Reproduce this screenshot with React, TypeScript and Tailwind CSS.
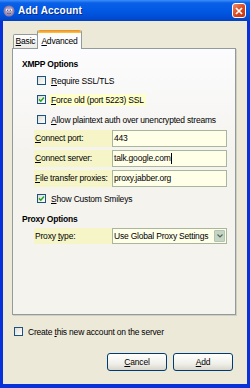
import React from 'react';

const Check: React.FC<{ checked?: boolean }> = ({ checked }) => (
  <div className="w-[9px] h-[9px] flex-none border border-[#1c5180] bg-[linear-gradient(135deg,#dcdcd7,#ffffff)] flex items-center justify-center">
    {checked && (
      <svg width="7" height="7" viewBox="0 0 7 7">
        <path d="M1 3.4 L2.8 5.2 L6 1.6" fill="none" stroke="#21a121" strokeWidth="1.5" />
      </svg>
    )}
  </div>
);

const CheckRow: React.FC<{ checked?: boolean; hi?: boolean; className?: string; children: React.ReactNode }> = ({
  checked,
  hi,
  className,
  children
}) => (
  <div className={`h-[13px] flex items-center ${className ?? ''}`}>
    <Check checked={checked} />
    <span className={`ml-[3px] px-[2px] h-[12px] leading-[12px] ${hi ? 'bg-[#ffffcc]' : ''}`}>{children}</span>
  </div>
);

const FieldRow: React.FC<{ label: React.ReactNode; value: string; cursor?: boolean }> = ({ label, value, cursor }) => (
  <div className="h-[17px] flex">
    <div className="w-[78px] bg-[#f5f5c8] pl-[1px] flex items-center">{label}</div>
    <div className="w-[115px] border border-[#a9b69f] bg-[#ffffe8] pl-[1px] flex items-center">
      <span>{value}</span>
      {cursor && <span className="w-px h-[11px] bg-black" />}
    </div>
  </div>
);

export default function App() {
  return (
    <div className="w-[250px] h-[388px] flex flex-col bg-[#0831d9] text-[8.5px] tracking-[-0.2px] text-black font-['Liberation_Sans',Arial,sans-serif]">
      {/* Title bar */}
      <div className="h-[21px] flex items-center pl-[3px] pr-[4px] bg-[linear-gradient(to_bottom,#3d8ff7_0%,#0a60e8_14%,#0058e2_55%,#024bd3_85%,#0141c0_100%)]">
        <svg width="12" height="12" viewBox="0 0 12 12" className="flex-none">
          <circle cx="6" cy="6" r="5.5" fill="#8b7fa6" />
          <circle cx="6" cy="6" r="4" fill="#a99cc4" />
          <circle cx="4.3" cy="5" r="1.3" fill="#fff" />
          <circle cx="7.7" cy="5" r="1.3" fill="#fff" />
          <circle cx="4.5" cy="5.2" r="0.6" fill="#333" />
          <circle cx="7.5" cy="5.2" r="0.6" fill="#333" />
          <path d="M4 8.3 Q6 9.6 8 8.3" fill="none" stroke="#5a4f75" strokeWidth="0.8" />
        </svg>
        <span className="ml-[3px] text-white font-bold text-[10px] tracking-[0.2px] [text-shadow:1px_1px_0_#0a2a8a]">
          Add Account
        </span>
        <div className="ml-auto w-[14px] h-[15px] rounded-[3px] border border-white bg-[linear-gradient(135deg,#f08a64,#d8461f_55%,#c23412)] flex items-center justify-center">
          <svg width="8" height="8" viewBox="0 0 8 8">
            <path d="M1 1 L7 7 M7 1 L1 7" stroke="#fff" strokeWidth="1.7" />
          </svg>
        </div>
      </div>

      {/* Body */}
      <div className="flex-1 mx-[3px] mb-[4px] bg-[#ece9d8] flex flex-col">
        {/* Tabs */}
        <div className="mt-[9px] h-[19px] flex items-end pl-[10px] relative z-10">
          <div className="w-[25px] h-[14px] mb-px border border-b-0 border-[#919b9c] rounded-t-[2px] bg-[linear-gradient(to_bottom,#ffffff,#ecebe6)] flex items-center justify-center">
            <span>
              <u>B</u>asic
            </span>
          </div>
          <div className="w-[45px] h-[19px] -ml-px border-x border-[#919b9c] rounded-t-[2px] bg-[#fcfcfe] flex flex-col">
            <div className="h-[3px] rounded-t-[2px] bg-[linear-gradient(to_bottom,#e68b2c,#ffc73c)]" />
            <div className="flex-1 flex items-center justify-center">
              <span>
                <u>A</u>dvanced
              </span>
            </div>
          </div>
        </div>

        {/* Panel */}
        <div className="-mt-px ml-[9px] w-[224px] h-[267px] border border-[#919b9c] bg-[linear-gradient(to_bottom,#fcfcfe,#f4f3ee_40%)] shadow-[1px_1px_0_#d0cec3] pl-[9px] pt-[9px] flex flex-col">
          <div className="h-[12px] leading-[12px] font-bold">XMPP Options</div>
          <div className="ml-[15px] flex flex-col">
            <CheckRow className="mt-[4px]">
              <u>R</u>equire SSL/TLS
            </CheckRow>
            <CheckRow checked hi className="mt-[6px]">
              <u>F</u>orce old (port 5223) SSL
            </CheckRow>
            <CheckRow className="mt-[7px]">
              <u>A</u>llow plaintext auth over unencrypted streams
            </CheckRow>
          </div>
          <div className="ml-[12px] mt-[4px] flex flex-col gap-[3px]">
            <FieldRow
              label={
                <span>
                  <u>C</u>onnect port:
                </span>
              }
              value="443"
            />
            <FieldRow
              label={
                <span>
                  <u>C</u>onnect server:
                </span>
              }
              value="talk.google.com"
              cursor
            />
            <FieldRow
              label={
                <span>
                  <u>F</u>ile transfer proxies:
                </span>
              }
              value="proxy.jabber.org"
            />
          </div>
          <CheckRow checked className="ml-[15px] mt-[5px]">
            <u>S</u>how Custom Smileys
          </CheckRow>
          <div className="mt-[8px] h-[12px] leading-[12px] font-bold">Proxy Options</div>
          <div className="ml-[12px] mt-[3px] h-[16px] flex">
            <div className="w-[78px] bg-[#f5f5c8] pl-[1px] flex items-center">
              <span>
                Proxy <u>t</u>ype:
              </span>
            </div>
            <div className="w-[115px] border border-[#a9b69f] bg-[#ffffe8] pl-[1px] pr-px flex items-center">
              <span>Use Global Proxy Settings</span>
              <div className="ml-auto w-[11px] h-[12px] rounded-[1px] bg-[#c6d4c4] border border-[#b4c3b2] flex items-center justify-center">
                <svg width="6" height="4" viewBox="0 0 6 4">
                  <path d="M0.5 0.5 L3 3 L5.5 0.5" fill="none" stroke="#4d6a5a" strokeWidth="1.2" />
                </svg>
              </div>
            </div>
          </div>
        </div>

        {/* Create account */}
        <CheckRow className="ml-[11px] mt-[10px]">
          Create <u>t</u>his new account on the server
        </CheckRow>

        {/* Buttons */}
        <div className="mt-[15px] pr-[14px] flex justify-end gap-[6px]">
          <button className="w-[60px] h-[18px] rounded-[3px] border border-[#003c74] bg-[linear-gradient(to_bottom,#ffffff,#f0f0ea_60%,#d8d6cc)] flex items-center justify-center">
            <span>
              <u>C</u>ancel
            </span>
          </button>
          <button className="w-[60px] h-[18px] rounded-[3px] border border-[#003c74] bg-[linear-gradient(to_bottom,#ffffff,#f0f0ea_60%,#d8d6cc)] flex items-center justify-center">
            <span>
              <u>A</u>dd
            </span>
          </button>
        </div>
      </div>
    </div>
  );
}
